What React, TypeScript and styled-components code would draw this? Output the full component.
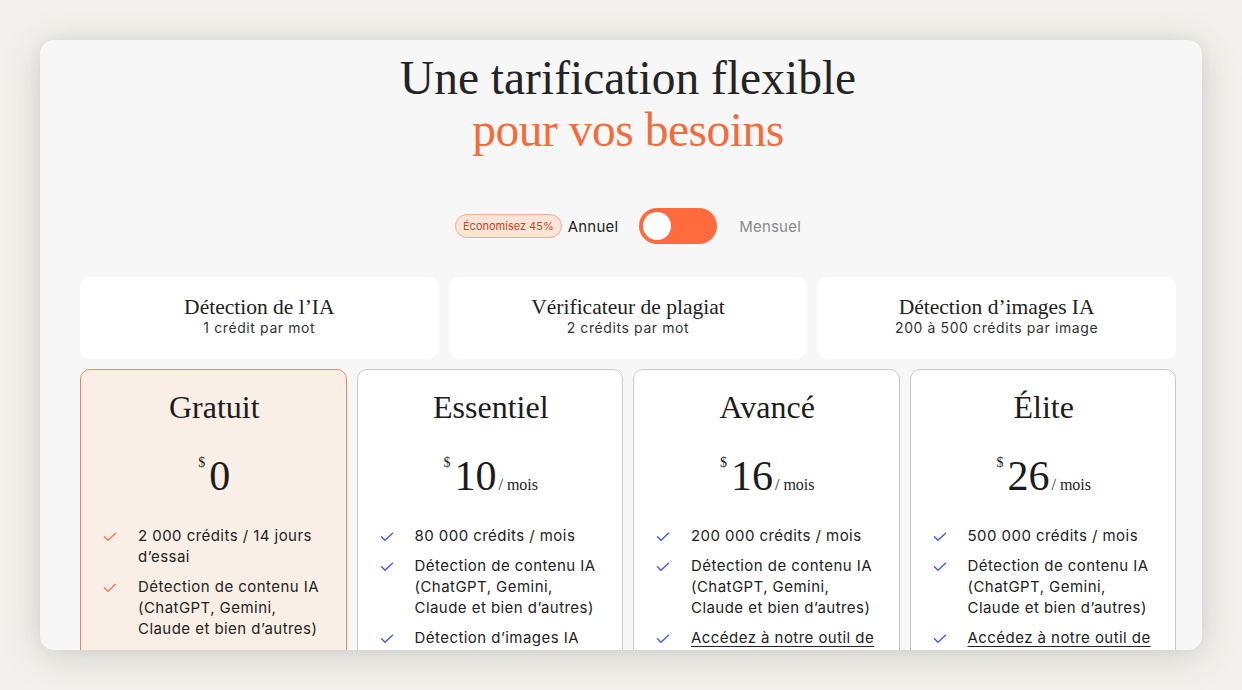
import React from "react";
import styled, { createGlobalStyle } from "styled-components";

const GlobalStyle = createGlobalStyle`
  html, body {
    margin: 0;
    padding: 0;
    background: #f2f1ed;
  }
  body {
    font-family: "Inter", "Liberation Sans", sans-serif;
    color: #1f1f1f;
  }
`;

const Page = styled.div`
  height: 690px;
  padding: 40px;
  box-sizing: border-box;
`;

const Panel = styled.div`
  height: 610px;
  background: #f7f7f7;
  border-radius: 14px;
  box-shadow: 0 6px 40px rgba(60, 60, 50, 0.18), 0 0 12px rgba(60, 60, 50, 0.06);
  overflow: hidden;
  padding: 12px 26px 0 40px;
  box-sizing: border-box;
`;

const Heading = styled.h1`
  font-family: "Liberation Serif", "DejaVu Serif", serif;
  font-weight: 400;
  font-size: 47.5px;
  line-height: 52px;
  text-align: center;
  margin: 0;
  color: #242424;
`;

const Accent = styled.span`
  display: block;
  color: #f26d3d;
  letter-spacing: -0.01em;
`;

const BillingRow = styled.div`
  display: flex;
  align-items: center;
  justify-content: center;
  margin-top: 52px;
  height: 36px;
`;

const SaveBadge = styled.span`
  font-size: 11px;
  color: #c4461f;
  background: #fde4d9;
  border: 1px solid #f3ab8f;
  border-radius: 12px;
  padding: 4px 7px;
  margin-right: 6px;
`;

const PeriodLabel = styled.span<{ $muted?: boolean }>`
  font-size: 15px;
  letter-spacing: 0.2px;
  color: ${(p) => (p.$muted ? "#8a8a8a" : "#222")};
`;

const Switch = styled.div`
  width: 78px;
  height: 36px;
  border-radius: 18px;
  background: #ff6b3d;
  margin: 0 22px 0 21px;
  display: flex;
  align-items: center;
  padding: 0 4px;
  box-sizing: border-box;
`;

const Knob = styled.div`
  width: 28px;
  height: 28px;
  border-radius: 50%;
  background: #fff;
`;

const ToolGrid = styled.div`
  display: grid;
  grid-template-columns: repeat(3, 1fr);
  gap: 10px;
  margin-top: 33px;
`;

const ToolCard = styled.div`
  background: #fff;
  border-radius: 10px;
  height: 82px;
  display: flex;
  flex-direction: column;
  align-items: center;
  padding-top: 18px;
  box-sizing: border-box;
`;

const ToolName = styled.div`
  font-family: "Liberation Serif", "DejaVu Serif", serif;
  font-size: 21.5px;
  line-height: 24px;
  color: #222;
`;

const ToolCost = styled.div`
  font-size: 14px;
  letter-spacing: 0.6px;
  line-height: 18px;
  color: #333;
`;

const PlanGrid = styled.div`
  display: grid;
  grid-template-columns: repeat(4, 1fr);
  gap: 10px;
  margin-top: 10px;
`;

const PlanCard = styled.div<{ $featured?: boolean }>`
  background: ${(p) => (p.$featured ? "#faefe7" : "#fff")};
  border: 1px solid ${(p) => (p.$featured ? "#e9876a" : "#c9c9c9")};
  border-radius: 10px;
  height: 320px;
  padding: 19px 20px 0 22px;
  box-sizing: border-box;
`;

const PlanName = styled.div`
  font-family: "Liberation Serif", "DejaVu Serif", serif;
  font-size: 32px;
  line-height: 36px;
  text-align: center;
  color: #1c1c1c;
`;

const Price = styled.div`
  display: flex;
  justify-content: center;
  align-items: baseline;
  font-family: "Liberation Serif", "DejaVu Serif", serif;
  margin-top: 26px;
  height: 50px;
  color: #1c1c1c;
`;

const Currency = styled.span`
  font-size: 14px;
  align-self: flex-start;
  margin-top: 4px;
  margin-right: 4px;
`;

const Amount = styled.span`
  font-size: 42px;
  line-height: 50px;
`;

const Per = styled.span`
  font-size: 16px;
  margin-left: 2px;
`;

const Features = styled.ul`
  list-style: none;
  margin: 24px 0 0;
  padding: 0;
  display: flex;
  flex-direction: column;
  gap: 9px;
`;

const Feature = styled.li<{ $link?: boolean }>`
  display: flex;
  gap: 21px;
  font-size: 15px;
  letter-spacing: 0.45px;
  line-height: 21px;
  color: #222;
  text-decoration: ${(p) => (p.$link ? "underline" : "none")};
  text-underline-offset: 3px;
`;

const Tick = styled.svg`
  flex: none;
  width: 14px;
  height: 10px;
  margin-top: 7px;
`;

function CheckMark({ color }: { color: string }) {
  return (
    <Tick viewBox="0 0 14 10" fill="none">
      <polyline
        points="1.5,4.8 5,8.3 12.5,1.2"
        stroke={color}
        strokeWidth={1.5}
        strokeLinecap="round"
        strokeLinejoin="round"
      />
    </Tick>
  );
}

const tools = [
  { name: "Détection de l’IA", cost: "1 crédit par mot" },
  { name: "Vérificateur de plagiat", cost: "2 crédits par mot" },
  { name: "Détection d’images IA", cost: "200 à 500 crédits par image" },
];

type Plan = {
  name: string;
  amount: string;
  monthly: boolean;
  featured?: boolean;
  features: { text: string; link?: boolean }[];
};

const shared = [
  { text: "Détection de contenu IA (ChatGPT, Gemini, Claude et bien d’autres)" },
];

const plans: Plan[] = [
  {
    name: "Gratuit",
    amount: "0",
    monthly: false,
    featured: true,
    features: [{ text: "2 000 crédits / 14 jours d’essai" }, ...shared],
  },
  {
    name: "Essentiel",
    amount: "10",
    monthly: true,
    features: [{ text: "80 000 crédits / mois" }, ...shared, { text: "Détection d’images IA" }],
  },
  {
    name: "Avancé",
    amount: "16",
    monthly: true,
    features: [
      { text: "200 000 crédits / mois" },
      ...shared,
      { text: "Accédez à notre outil de", link: true },
    ],
  },
  {
    name: "Élite",
    amount: "26",
    monthly: true,
    features: [
      { text: "500 000 crédits / mois" },
      ...shared,
      { text: "Accédez à notre outil de", link: true },
    ],
  },
];

export default function App() {
  return (
    <>
      <GlobalStyle />
      <Page>
        <Panel>
          <Heading>
            Une tarification flexible
            <Accent>pour vos besoins</Accent>
          </Heading>

          <BillingRow>
            <SaveBadge>Économisez 45%</SaveBadge>
            <PeriodLabel>Annuel</PeriodLabel>
            <Switch>
              <Knob />
            </Switch>
            <PeriodLabel $muted>Mensuel</PeriodLabel>
          </BillingRow>

          <ToolGrid>
            {tools.map((t) => (
              <ToolCard key={t.name}>
                <ToolName>{t.name}</ToolName>
                <ToolCost>{t.cost}</ToolCost>
              </ToolCard>
            ))}
          </ToolGrid>

          <PlanGrid>
            {plans.map((p) => (
              <PlanCard key={p.name} $featured={p.featured}>
                <PlanName>{p.name}</PlanName>
                <Price>
                  <Currency>$</Currency>
                  <Amount>{p.amount}</Amount>
                  {p.monthly && <Per>/ mois</Per>}
                </Price>
                <Features>
                  {p.features.map((f) => (
                    <Feature key={f.text} $link={f.link}>
                      <CheckMark color={p.featured ? "#f07a55" : "#4a5fe0"} />
                      <span>{f.text}</span>
                    </Feature>
                  ))}
                </Features>
              </PlanCard>
            ))}
          </PlanGrid>
        </Panel>
      </Page>
    </>
  );
}
